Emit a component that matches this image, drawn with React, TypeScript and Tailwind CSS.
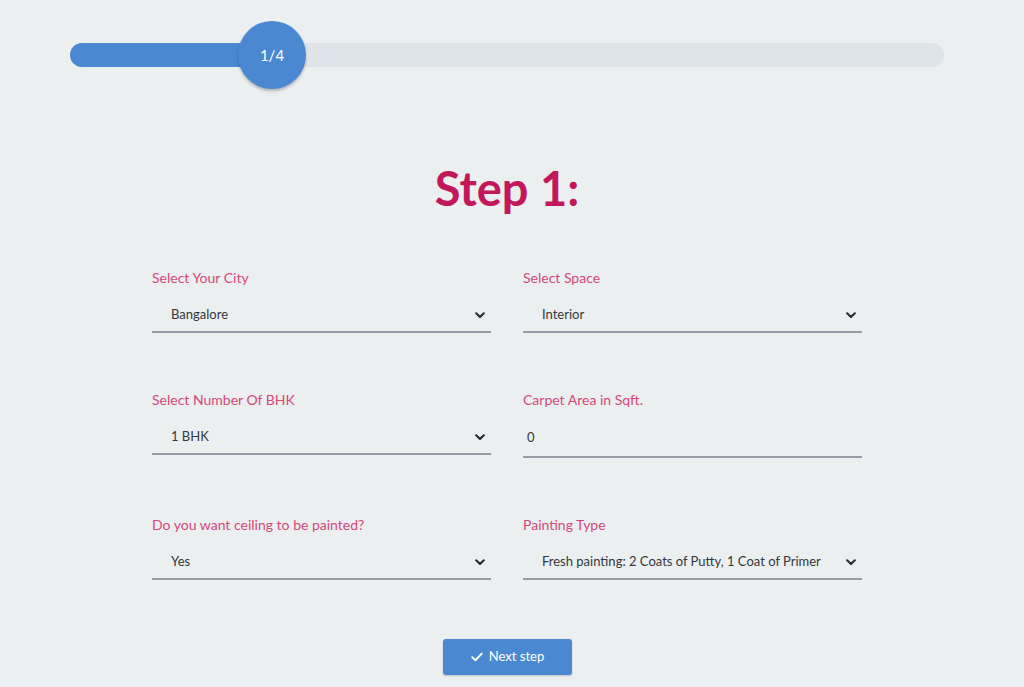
import { useState } from 'react';

type Field = {
  label: string;
  kind: 'select' | 'input';
  value: string;
  options?: string[];
};

const fields: Field[] = [
  { label: 'Select Your City', kind: 'select', value: 'Bangalore', options: ['Bangalore', 'Mumbai', 'Delhi', 'Chennai'] },
  { label: 'Select Space', kind: 'select', value: 'Interior', options: ['Interior', 'Exterior'] },
  { label: 'Select Number Of BHK', kind: 'select', value: '1 BHK', options: ['1 BHK', '2 BHK', '3 BHK', '4 BHK'] },
  { label: 'Carpet Area in Sqft.', kind: 'input', value: '0' },
  { label: 'Do you want ceiling to be painted?', kind: 'select', value: 'Yes', options: ['Yes', 'No'] },
  {
    label: 'Painting Type',
    kind: 'select',
    value: 'Fresh painting: 2 Coats of Putty, 1 Coat of Primer',
    options: ['Fresh painting: 2 Coats of Putty, 1 Coat of Primer', 'Repainting: 1 Coat of Primer'],
  },
];

function Chevron() {
  return (
    <svg width="10" height="7" viewBox="0 0 10 7" className="pointer-events-none absolute right-[6px] top-[14px]">
      <path d="M1.2 1.3 5 5 8.8 1.3" fill="none" stroke="#2b2f33" strokeWidth="2.2" strokeLinecap="round" strokeLinejoin="round" />
    </svg>
  );
}

function FormField({ field }: { field: Field }) {
  const [value, setValue] = useState(field.value);
  return (
    <div className="flex flex-col">
      <label className="text-[14px] leading-[18px] text-[#d4487c]">{field.label}</label>
      {field.kind === 'select' ? (
        <div className="relative mt-[11px]">
          <select
            value={value}
            onChange={(e) => setValue(e.target.value)}
            className="h-[35px] w-full appearance-none border-b-2 border-[#959ca3] bg-transparent pl-[19px] pr-8 text-[13px] text-[#33383d] outline-none"
          >
            {field.options?.map((o) => (
              <option key={o} value={o}>
                {o}
              </option>
            ))}
          </select>
          <Chevron />
        </div>
      ) : (
        <input
          type="text"
          value={value}
          onChange={(e) => setValue(e.target.value)}
          className="mt-[9px] h-[40px] w-full border-b-2 border-[#959ca3] bg-transparent pl-[4px] text-[13px] text-[#33383d] outline-none"
        />
      )}
    </div>
  );
}

export default function App() {
  return (
    <div className="min-h-[687px] bg-[#ebeff0] font-['Lato','Liberation_Sans',sans-serif]">
      <div className="pl-[70px] pt-[43px]">
        <div className="relative h-[24px] w-[874px] rounded-full bg-[#dfe4e8]">
          <div className="h-full w-[200px] rounded-l-full bg-[#4a88d2]" />
          <div className="absolute left-[168px] top-[-22px] flex h-[68px] w-[68px] items-center justify-center rounded-full bg-[#4a88d2] text-[15px] text-white shadow-[0_2px_3px_rgba(0,0,0,0.25)]">
            1/4
          </div>
        </div>
      </div>

      <h1 className="mt-[93px] w-[1014px] text-center text-[47px] font-bold leading-[56px] text-[#c2185b]">Step 1:</h1>

      <div className="ml-[152px] mt-[53px] grid w-[710px] grid-cols-2 gap-x-[32px] gap-y-[58px]">
        {fields.map((f) => (
          <FormField key={f.label} field={f} />
        ))}
      </div>

      <div className="mt-[59px] flex w-[1015px] justify-center">
        <button className="flex h-[36px] w-[129px] items-center justify-center gap-[6px] rounded-[3px] bg-[#4a88d2] text-[13px] text-white shadow-[0_1px_2px_rgba(0,0,0,0.2)]">
          <svg width="12" height="10" viewBox="0 0 12 10">
            <path d="M1.3 5.2 4.4 8.2 10.7 1.6" fill="none" stroke="white" strokeWidth="2" strokeLinecap="round" strokeLinejoin="round" />
          </svg>
          Next step
        </button>
      </div>
    </div>
  );
}
